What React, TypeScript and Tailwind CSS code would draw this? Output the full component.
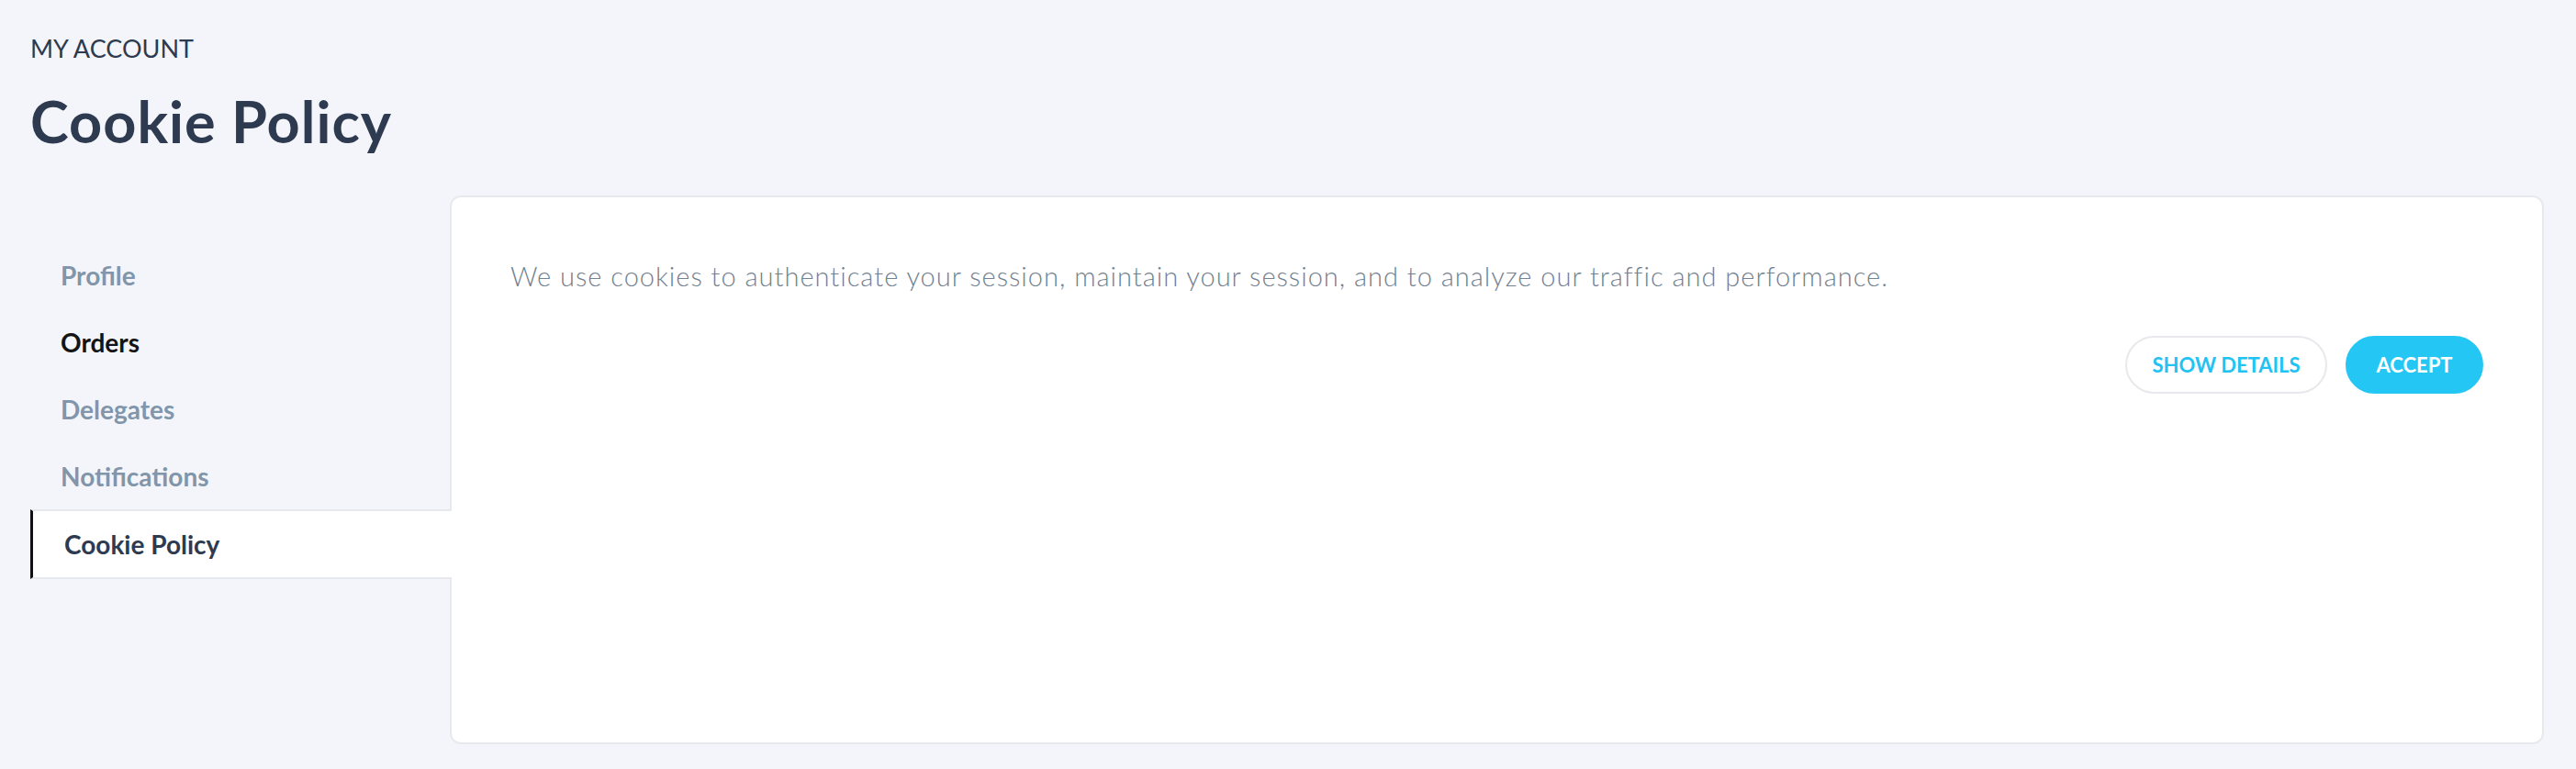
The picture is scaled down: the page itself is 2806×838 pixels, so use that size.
const navItems = [
  { label: 'Profile', tone: 'muted' },
  { label: 'Orders', tone: 'dark' },
  { label: 'Delegates', tone: 'muted' },
  { label: 'Notifications', tone: 'muted' },
  { label: 'Cookie Policy', tone: 'active' },
]

export default function App() {
  return (
    <div
      className="min-h-screen w-full bg-[#f4f5fa] pl-[33px] pr-[35px] pt-[37px] pb-[27px] text-[#2e3a4f]"
      style={{ fontFamily: 'Lato, "Open Sans", sans-serif' }}
    >
      {/* Header */}
      <p className="text-[27px] leading-[32px] font-normal">MY ACCOUNT</p>
      <h1 className="mt-[26px] text-[63px] leading-[74px] font-bold tracking-[1px]">Cookie Policy</h1>

      <div className="mt-[44px] flex h-[598px]">
        {/* Sidebar */}
        <nav className="relative z-10 w-[457px] shrink-0 pt-[50px]">
          {navItems.map((item) =>
            item.tone === 'active' ? (
              <div
                key={item.label}
                className="mr-[-2px] flex h-[76px] items-center border-y-2 border-l-[3px] border-y-[#e8e9ee] border-l-[#111111] bg-white pl-[34px] text-[28px] font-bold text-[#2e3a4f]"
              >
                {item.label}
              </div>
            ) : (
              <div
                key={item.label}
                className={
                  item.tone === 'dark'
                    ? 'flex h-[73px] items-center pl-[33px] text-[28px] font-bold text-[#141414]'
                    : 'flex h-[73px] items-center pl-[33px] text-[28px] font-bold text-[#8196ab]'
                }
              >
                {item.label}
              </div>
            )
          )}
        </nav>

        {/* Card */}
        <div className="flex-1 rounded-xl border-2 border-[#e8e9ee] bg-white px-[64px] pt-[66px]">
          <p className="text-[29px] leading-[40px] font-light tracking-[1px] text-[#738190]">
            We use cookies to authenticate your session, maintain your session, and to analyze our traffic and performance.
          </p>
          <div className="mt-[45px] flex justify-end gap-[20px]">
            <button className="h-[63px] w-[220px] rounded-full border-2 border-[#e8e9ec] bg-white text-[22px] font-bold text-[#22c3f3]">
              SHOW DETAILS
            </button>
            <button className="h-[63px] w-[150px] rounded-full border-2 border-[#24c6f4] bg-[#24c6f4] text-[22px] font-bold text-white">
              ACCEPT
            </button>
          </div>
        </div>
      </div>
    </div>
  )
}
